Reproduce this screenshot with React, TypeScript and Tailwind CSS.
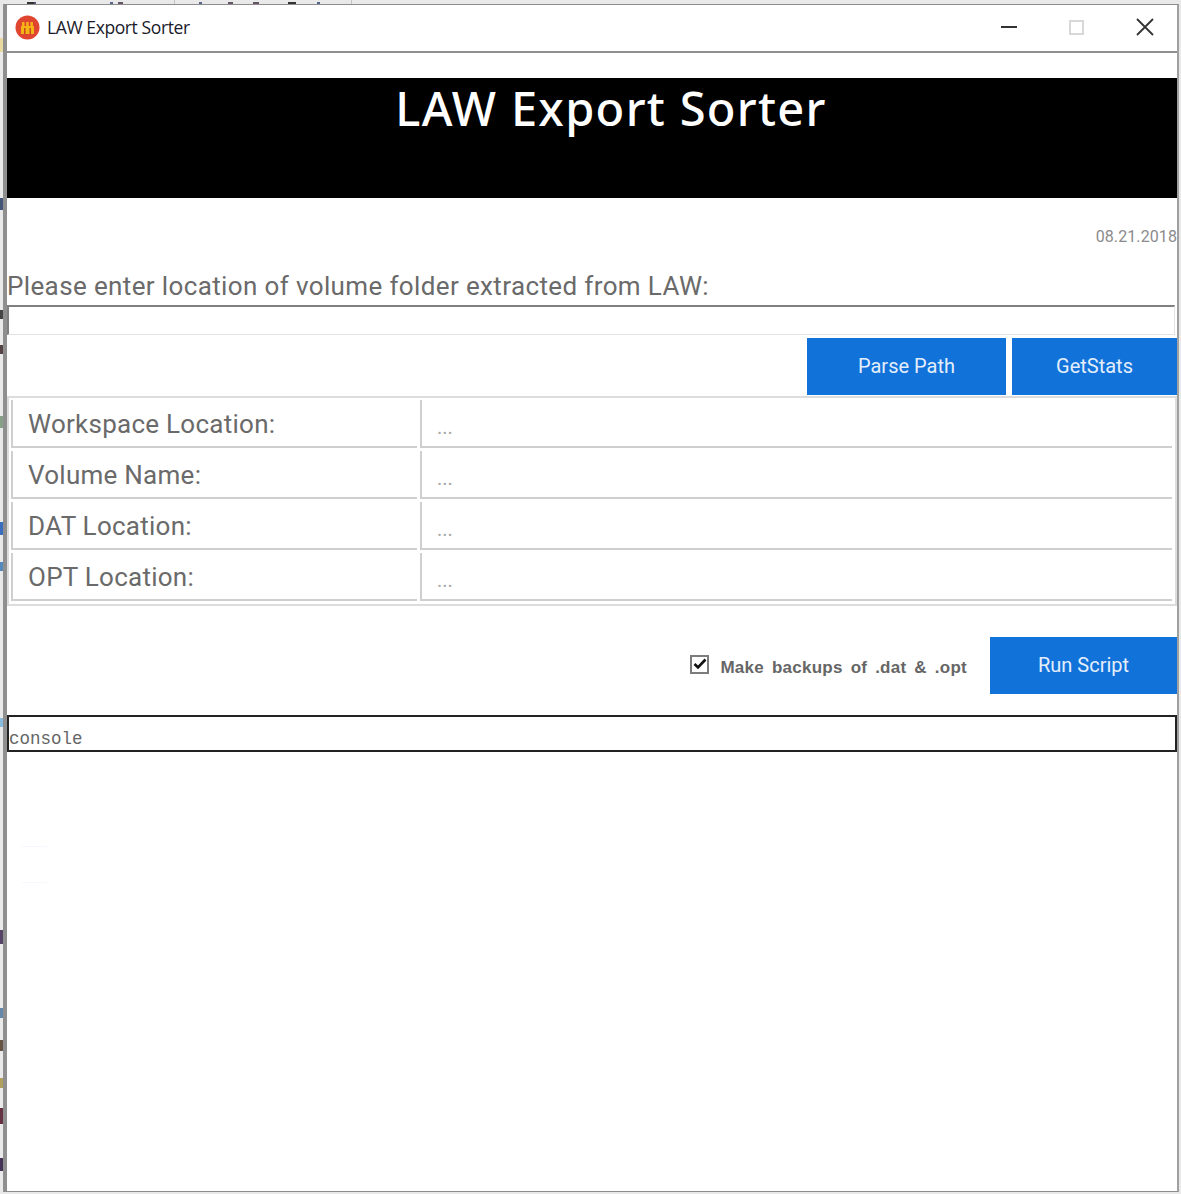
const infoRows = ["Workspace Location:", "Volume Name:", "DAT Location:", "OPT Location:"];

// bits of the windows behind this one, showing along the top and left edges
const behindBits = [
  { x: 27, y: 2, w: 9, h: 2, color: "#333333" },
  { x: 34, y: 2, w: 2, h: 2, color: "#555577" },
  { x: 110, y: 2, w: 3, h: 2, color: "#556688" },
  { x: 118, y: 2, w: 5, h: 2, color: "#665566" },
  { x: 174, y: 0, w: 1, h: 4, color: "#c4c4c4" },
  { x: 199, y: 2, w: 3, h: 2, color: "#556688" },
  { x: 228, y: 2, w: 5, h: 2, color: "#665566" },
  { x: 253, y: 2, w: 6, h: 2, color: "#665566" },
  { x: 288, y: 2, w: 8, h: 2, color: "#333333" },
  { x: 317, y: 2, w: 3, h: 2, color: "#556688" },
  { x: 351, y: 0, w: 1, h: 4, color: "#c4c4c4" },
  { x: 0, y: 38, w: 3, h: 14, color: "#e8d9a0" },
  { x: 0, y: 198, w: 3, h: 12, color: "#445577" },
  { x: 0, y: 310, w: 3, h: 9, color: "#444444" },
  { x: 0, y: 345, w: 3, h: 9, color: "#554444" },
  { x: 0, y: 416, w: 3, h: 12, color: "#88a088" },
  { x: 0, y: 522, w: 3, h: 13, color: "#3a6fc0" },
  { x: 0, y: 562, w: 3, h: 9, color: "#5588bb" },
  { x: 0, y: 718, w: 3, h: 9, color: "#88bbdd" },
  { x: 0, y: 930, w: 3, h: 14, color: "#554466" },
  { x: 0, y: 1008, w: 3, h: 10, color: "#6688aa" },
  { x: 0, y: 1040, w: 3, h: 11, color: "#665544" },
  { x: 0, y: 1078, w: 3, h: 10, color: "#b0a060" },
  { x: 0, y: 1108, w: 3, h: 16, color: "#663344" },
  { x: 0, y: 1158, w: 3, h: 13, color: "#443355" },
];

function AppIcon() {
  return (
    <svg width="25" height="25" viewBox="0 0 25 25" className="shrink-0">
      <circle cx="12.5" cy="12.5" r="12" fill="#e0452f" />
      <rect x="6" y="11" width="13" height="8" fill="#f5b416" />
      <rect x="7" y="7" width="2.5" height="5" fill="#f5b416" />
      <rect x="11.2" y="7" width="2.5" height="5" fill="#f5b416" />
      <rect x="15.4" y="7" width="2.5" height="5" fill="#f5b416" />
      <rect x="9" y="13" width="1.5" height="6" fill="#c9471f" />
      <rect x="14.5" y="13" width="1.5" height="6" fill="#c9471f" />
    </svg>
  );
}

function BlueButton({ label, className }: { label: string; className: string }) {
  return (
    <button
      type="button"
      className={`flex h-[57px] items-center justify-center bg-[#1172da] pb-[1px] font-['Roboto',sans-serif] text-[20px] text-[#e4eefb] ${className}`}
    >
      {label}
    </button>
  );
}

export default function App() {
  return (
    <div className="relative h-[1194px] w-[1181px] overflow-hidden bg-[#e9e9e9] pl-[3px] pt-[4px]">
      {behindBits.map((b) => (
        <div
          key={`${b.x}-${b.y}`}
          className="absolute"
          style={{ left: b.x, top: b.y, width: b.w, height: b.h, backgroundColor: b.color }}
        />
      ))}

      <div className="flex h-[1188px] w-[1176px] flex-col border-y border-r-2 border-l-[4px] border-y-[#8c8c8c] border-r-[#a0a0a0] border-l-[#8f8f8f] bg-white">
        {/* title bar */}
        <div className="-ml-[1px] flex h-[48px] shrink-0 items-center border-b-2 border-[#8f8f8f] pb-[2px] pl-[9px]">
          <AppIcon />
          <span className="ml-[7px] font-['Open_Sans',sans-serif] text-[17.5px] tracking-[-0.4px] text-[#1a1a2a]">
            LAW Export Sorter
          </span>
          <div className="ml-auto flex items-center pr-[23px]">
            <div className="mr-[51px] h-[2px] w-[16px] bg-[#333333]" />
            <div className="mr-[52px] ml-[1px] h-[15px] w-[15px] border-2 border-[#d8d8d8]" />
            <svg width="18" height="18" viewBox="0 0 18 18" stroke="#333333" strokeWidth="1.8">
              <path d="M1 1L17 17M17 1L1 17" />
            </svg>
          </div>
        </div>

        {/* banner */}
        <div className="mt-[25px] flex h-[120px] shrink-0 justify-center bg-black pl-[38px]">
          <h1 className="font-['Noto_Sans',sans-serif] text-[47px] leading-[60px] font-medium tracking-[1.3px] text-white">
            LAW Export Sorter
          </h1>
        </div>

        <p className="mt-[29px] text-right font-['Roboto',sans-serif] text-[16px] leading-[20px] tracking-[0.1px] text-[#8b8b8b]">
          08.21.2018
        </p>

        <label className="mt-[23px] font-['Roboto',sans-serif] text-[26px] leading-[32px] tracking-[0.37px] text-[#6a6a6a]">
          Please enter location of volume folder extracted from LAW:
        </label>

        {/* path input */}
        <div className="mt-[3px] mr-[2px] h-[30px] shrink-0 border border-t-2 border-l-2 border-[#e3e3e3] border-t-[#808080] border-l-[#808080]" />

        <div className="mt-[3px] flex justify-end gap-[6px]">
          <BlueButton label="Parse Path" className="w-[199px]" />
          <BlueButton label="GetStats" className="w-[165px]" />
        </div>

        {/* info table */}
        <div className="mt-[1px] flex h-[210px] shrink-0 flex-col gap-[3px] border-2 border-[#dcdcdc] pt-[2px] pr-[3px] pl-[2px]">
          {infoRows.map((row) => (
            <div key={row} className="flex h-[48px] shrink-0 gap-[3px]">
              <div className="flex w-[406px] items-center border-b-2 border-l-2 border-[#cfcfcf] pt-[2px] pl-[15px] font-['Roboto',sans-serif] text-[26px] tracking-[0.26px] text-[#6a6a6a]">
                {row}
              </div>
              <div className="flex flex-1 items-center border-b-2 border-l-2 border-[#cfcfcf] pt-[8px] pl-[15px] font-['Roboto',sans-serif] text-[20px] text-[#a8a8a8]">
                ...
              </div>
            </div>
          ))}
        </div>

        {/* run row */}
        <div className="mt-[31px] flex items-center justify-end">
          <span className="mr-[11px] -mt-[3px] flex h-[19px] w-[19px] items-center justify-center border-2 border-[#7c7c7c] bg-white">
            <svg width="14" height="12" viewBox="0 0 14 12" fill="none" stroke="#111111" strokeWidth="2.6">
              <path d="M1.5 6L5 9.5L12.5 1.5" />
            </svg>
          </span>
          <span className="mr-[23px] pt-[5px] font-['Liberation_Sans',sans-serif] text-[17px] font-bold tracking-[0.25px] text-[#666666] [word-spacing:3px]">
            Make backups of .dat &amp; .opt
          </span>
          <BlueButton label="Run Script" className="w-[187px]" />
        </div>

        {/* console */}
        <div className="mt-[21px] flex h-[37px] shrink-0 items-end border-2 border-[#222222] font-['Liberation_Mono',monospace] text-[17.5px] leading-[22px] text-[#666666]">
          console
        </div>

        {/* faint leftovers in the empty area */}
        <div className="mt-[94px] ml-[15px] h-[1px] w-[25px] shrink-0 bg-[#f5f8fc]" />
        <div className="mt-[35px] ml-[15px] h-[1px] w-[25px] shrink-0 bg-[#f5f8fc]" />
      </div>
    </div>
  );
}
